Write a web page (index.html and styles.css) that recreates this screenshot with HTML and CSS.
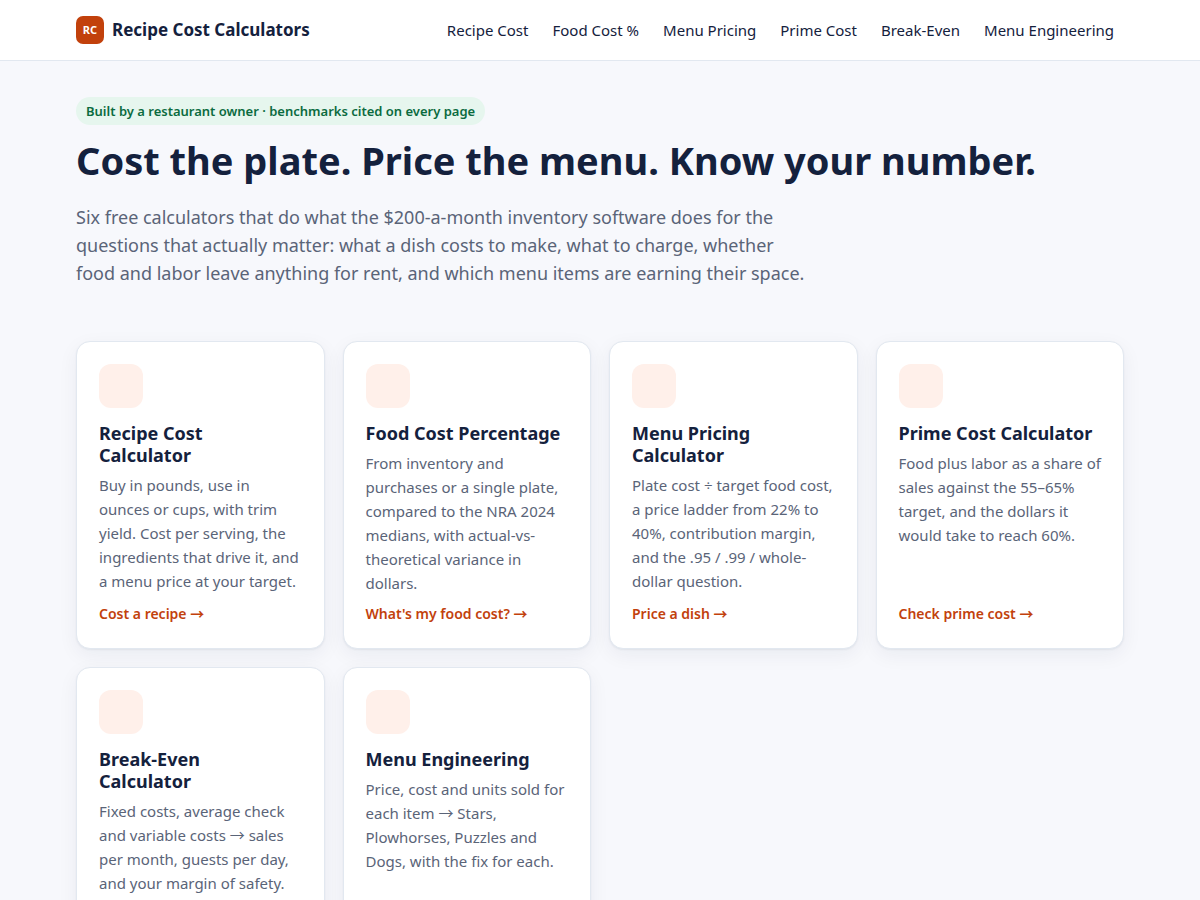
FILE: index.html
```html
<!DOCTYPE html>
<html lang="en">
<head>
<meta charset="utf-8">
<meta name="viewport" content="width=device-width, initial-scale=1">
<title>Recipe Cost Calculators</title>
<link rel="stylesheet" href="styles.css">
</head>
<body>
<header class="site-header">
  <div class="wrap header-inner">
    <a class="brand" href="#"><span class="logo">RC</span><span>Recipe Cost Calculators</span></a>
    <nav class="nav" aria-label="Main">
      <a href="#">Recipe Cost</a>
      <a href="#">Food Cost %</a>
      <a href="#">Menu Pricing</a>
      <a href="#">Prime Cost</a>
      <a href="#">Break-Even</a>
      <a href="#">Menu Engineering</a>
    </nav>
  </div>
</header>
<main class="wrap">
  <section class="hero">
    <span class="badge">Built by a restaurant owner · benchmarks cited on every page</span>
    <h1>Cost the plate. Price the menu. Know your number.</h1>
    <p class="lede">Six free calculators that do what the $200-a-month inventory software does for the questions that actually matter: what a dish costs to make, what to charge, whether food and labor leave anything for rent, and which menu items are earning their space.</p>
  </section>
  <section class="cards">
    <a class="card" href="#">
      <span class="icon"></span>
      <h2>Recipe Cost Calculator</h2>
      <p>Buy in pounds, use in ounces or cups, with trim yield. Cost per serving, the ingredients that drive it, and a menu price at your target.</p>
      <span class="go">Cost a recipe →</span>
    </a>
    <a class="card" href="#">
      <span class="icon"></span>
      <h2>Food Cost Percentage</h2>
      <p>From inventory and purchases or a single plate, compared to the NRA 2024 medians, with actual-vs-theoretical variance in dollars.</p>
      <span class="go">What's my food cost? →</span>
    </a>
    <a class="card" href="#">
      <span class="icon"></span>
      <h2>Menu Pricing Calculator</h2>
      <p>Plate cost ÷ target food cost, a price ladder from 22% to 40%, contribution margin, and the .95 / .99 / whole-dollar question.</p>
      <span class="go">Price a dish →</span>
    </a>
    <a class="card" href="#">
      <span class="icon"></span>
      <h2>Prime Cost Calculator</h2>
      <p>Food plus labor as a share of sales against the 55–65% target, and the dollars it would take to reach 60%.</p>
      <span class="go">Check prime cost →</span>
    </a>
    <a class="card" href="#">
      <span class="icon"></span>
      <h2>Break-Even Calculator</h2>
      <p>Fixed costs, average check and variable costs → sales per month, guests per day, and your margin of safety.</p>
      <span class="go">Find break-even →</span>
    </a>
    <a class="card" href="#">
      <span class="icon"></span>
      <h2>Menu Engineering</h2>
      <p>Price, cost and units sold for each item → Stars, Plowhorses, Puzzles and Dogs, with the fix for each.</p>
      <span class="go">Sort my menu →</span>
    </a>
  </section>
</main>
</body>
</html>
```
FILE: styles.css
```css
* { box-sizing: border-box; }

body {
  margin: 0;
  background: #f7f8fc;
  color: #14213d;
  font: 16px/1.6 "Noto Sans", "Noto Sans CJK JP", sans-serif;
}

a { color: inherit; text-decoration: none; }

.wrap {
  max-width: 1088px;
  margin: 0 auto;
  padding: 0 20px;
}

.site-header {
  background: #fff;
  border-bottom: 1px solid #e2e8f0;
}

.header-inner {
  display: flex;
  align-items: center;
  justify-content: space-between;
  min-height: 60px;
}

.brand {
  display: flex;
  align-items: center;
  gap: 8px;
  font-size: 17px;
  font-weight: 700;
}

.logo {
  display: grid;
  place-items: center;
  width: 28px;
  height: 28px;
  border-radius: 7px;
  background: #c2410c;
  color: #fff;
  font-size: 11px;
}

.nav {
  display: flex;
  gap: 4px;
}

.nav a {
  padding: 6px 10px;
  font-size: 15px;
  line-height: 22px;
}

.hero { padding: 36px 0 54px; }

.badge {
  display: inline-block;
  padding: 4px 10px;
  border-radius: 999px;
  background: #e6f6ee;
  color: #0b6b3f;
  font-size: 13px;
  line-height: 20px;
  font-weight: 600;
}

h1 {
  margin: 11px 0 19px;
  font-size: 38px;
  line-height: 48px;
}

.lede {
  max-width: 734px;
  margin: 0;
  color: #5a6478;
  font-size: 18px;
  line-height: 28px;
}

.cards {
  display: grid;
  grid-template-columns: repeat(auto-fill, minmax(240px, 1fr));
  gap: 18px;
  padding-bottom: 48px;
}

.card {
  display: flex;
  flex-direction: column;
  padding: 22px;
  border: 1px solid #e2e8f0;
  border-radius: 14px;
  background: #fff;
  box-shadow: 0 1px 2px rgba(20, 33, 61, 0.06), 0 6px 20px rgba(20, 33, 61, 0.06);
}

.icon {
  width: 44px;
  height: 44px;
  border-radius: 12px;
  background: #fff0ea;
}

.card h2 {
  margin: 14px 0 7px;
  padding-right: 6px;
  font-size: 18px;
  line-height: 22px;
}

.card p {
  flex: 1;
  margin: 0 0 7px;
  color: #5a6478;
  font-size: 15px;
  line-height: 24px;
}

.go {
  color: #c2410c;
  font-size: 14px;
  line-height: 24px;
  font-weight: 600;
}
```
